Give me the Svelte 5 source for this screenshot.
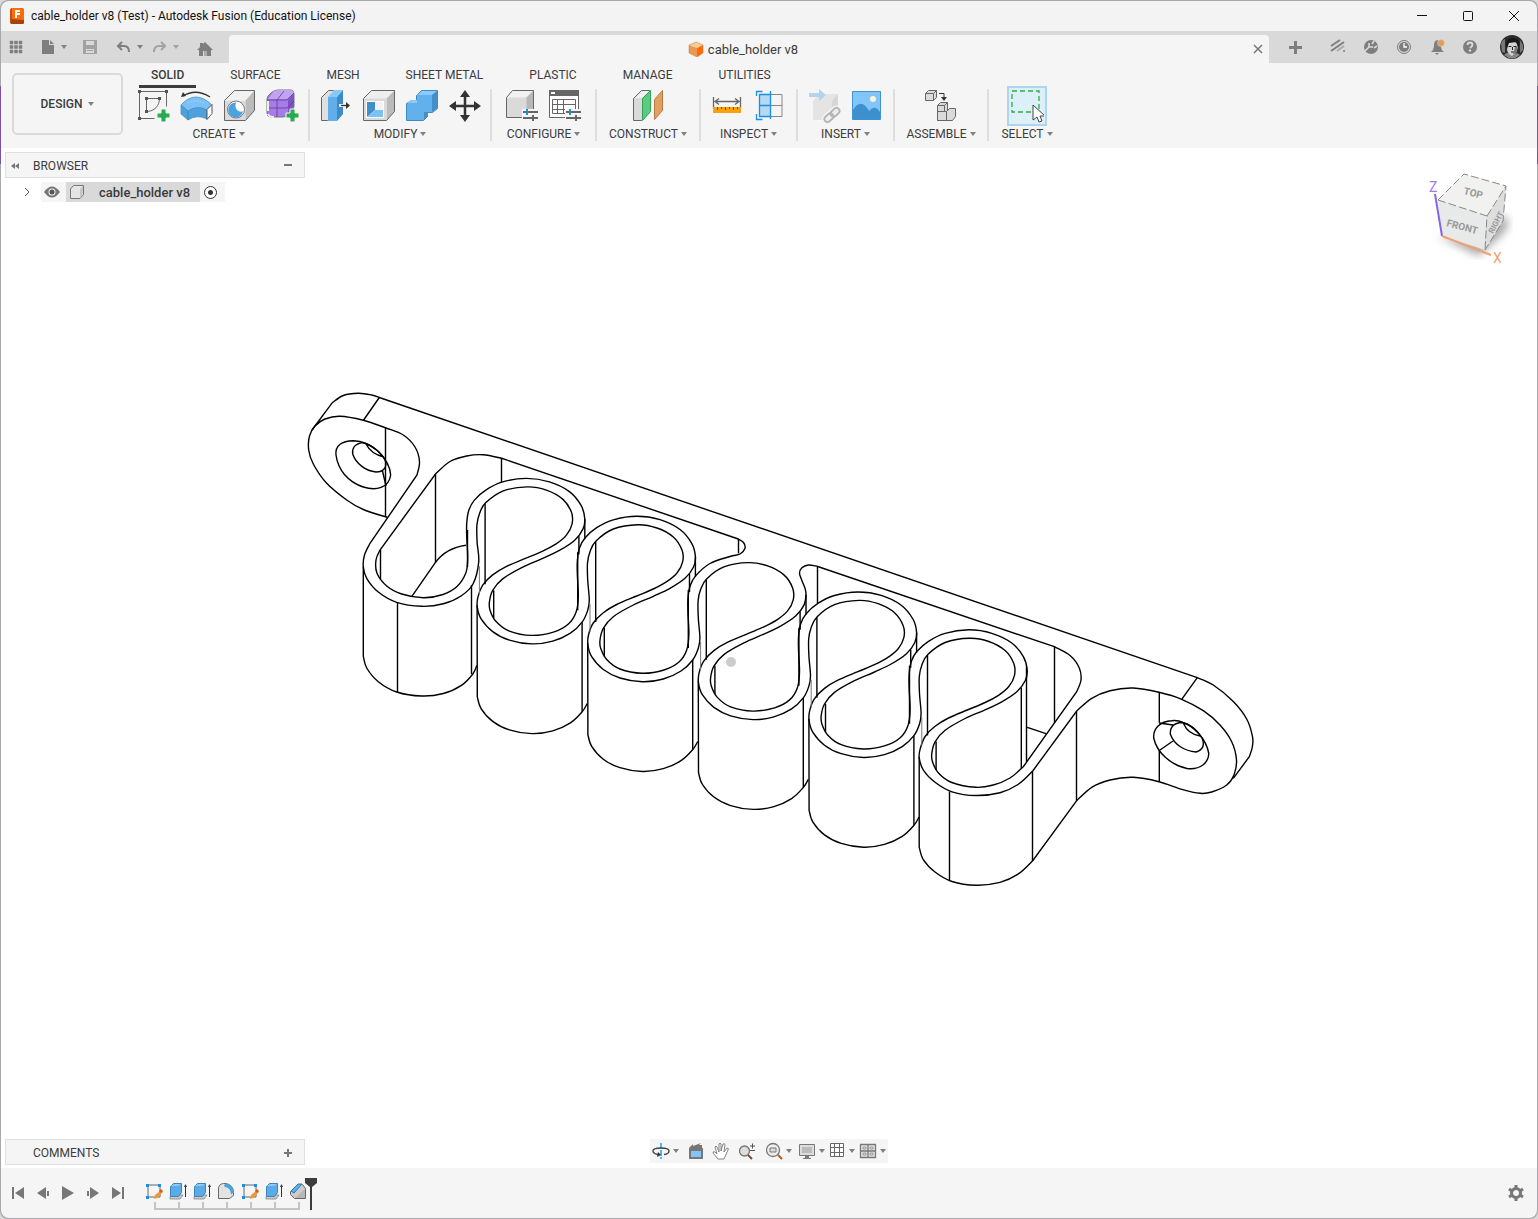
<script lang="ts">
  type Point = [number, number];

  const tabs = ["SOLID", "SURFACE", "MESH", "SHEET METAL", "PLASTIC", "MANAGE", "UTILITIES"];
  let activeTab = "SOLID";
  let commentsOpen = false;

  const groups = [
    { label: "CREATE", tools: ["sketch", "revolve", "hole", "form"] },
    { label: "MODIFY", tools: ["pressPull", "shell", "combine", "move"] },
    { label: "CONFIGURE", tools: ["configure", "configTable"] },
    { label: "CONSTRUCT", tools: ["plane"] },
    { label: "INSPECT", tools: ["measure", "section"] },
    { label: "INSERT", tools: ["derive", "canvas"] },
    { label: "ASSEMBLE", tools: ["assemble"] },
    { label: "SELECT", tools: ["select"] },
  ];

  const quick = [
    { name: "apps", menu: false, off: false },
    { name: "file", menu: true, off: false },
    { name: "save", menu: false, off: true },
    { name: "undo", menu: true, off: false },
    { name: "redo", menu: true, off: true },
    { name: "home", menu: false, off: false },
  ];
  const status = ["extensions", "updates", "jobs", "alerts", "help"];

  const navTools = [
    { name: "orbit", menu: true },
    { name: "lookAt", menu: false },
    { name: "pan", menu: false },
    { name: "zoom", menu: false },
    { name: "fit", menu: true },
    { name: "display", menu: true },
    { name: "grid", menu: true },
    { name: "viewports", menu: true },
  ];

  const playback = ["first", "prev", "play", "next", "last"];
  const features = ["tSketch", "tExtrude", "tExtrude", "tFillet", "tSketch", "tExtrude", "tChamfer"];

  // ribbon icons, 34 x 34
  const plus = `<path d="M24 20h5v4h4v5h-4v4h-5v-4h-4v-5h4z" fill="#2bab50" stroke="#f5f5f5"/>`;
  const sliders = `<path d="M17 23h18M17 29h18" stroke="#f5f5f5" stroke-width="6"/><path d="M18 23h15M18 29h15M28 26v6" stroke="#666" stroke-width="2"/><path d="M22 20v6" stroke="#1a8fe3" stroke-width="2"/>`;
  const ribbon: Record<string, string> = {
    sketch: `<path d="M2.5 2.5h27M2.5 2.5v27M2.5 29.5h15M29.5 2.5v15M9.5 9.5h13M9.5 9.5v13M22.5 9.5c0 7-5 13-13 13" fill="none" stroke="#666"/><path d="M1 1h3v3H1zM28 1h3v3h-3zM1 28h3v3H1zM8 8h3v3H8zM21 8h3v3h-3zM8 21h3v3H8z" fill="#555"/>${plus}`,
    revolve: `<path d="M3 7Q16-1 30 8" fill="none" stroke="#333" stroke-width="1.3"/><path d="M1 8l2-5 3 4z" fill="#333"/><path d="M1 16Q8 8 16 8t16 8l-5 5q-10-5-19 1z" fill="#7cc0f8" stroke="#3f8ec4" stroke-width=".7"/><path d="M1 16l7 6v9l-7-6zM8 22q9-6 19-1v9q-10-5-19 1z" fill="#4fa1dc" stroke="#3f8ec4" stroke-width=".7"/><path d="M27 20.5l5-5v9l-5 6z" fill="#fff" stroke="#555"/><path d="M8 14q8-4 16 0" fill="none" stroke="#cfe8fb" stroke-dasharray="1 2"/>`,
    hole: `<path d="M1.5 11.5h21v20h-21z" fill="#dadada"/><path d="M1.5 11.5l10-10h20l-9 10z" fill="#f1f1f1"/><path d="M22.5 11.5l9-10v20l-9 10z" fill="#bbb"/><path d="M1.5 11.5l10-10h20v20l-9 10h-21z" fill="none" stroke="#666"/><circle cx="13" cy="20.5" r="8.5" fill="#fff" stroke="#777"/><path d="M13 13.5a7.5 7.5 0 1 0 7 9c-5 1-9-3-7-9z" fill="#4ba2e0"/>`,
    form: `<path d="M1 10q0-3 4-6l3-2q2-1 5-1h12q3 0 3 4v12q0 3-3 6l-3 3q-2 2-5 2H5q-4 0-4-4z" fill="#a77be8" stroke="#777"/><path d="M2 10l6-8q2-1 5-1h12q3 0 3 3l-7 6z" fill="#c3a2f4"/><path d="M22 11l6-7v13l-6 8z" fill="#8052c7"/><path d="M1 11h20l7-7M11 11v17M1 19h20l7-7M11 11l7-9" fill="none" stroke="#5c4387" stroke-width=".8"/><path d="M2 25q1 3 6 3M2 12v10" fill="none" stroke="#eee" stroke-width="2"/>${plus}`,
    pressPull: `<path d="M2.5 8.5l7-7h5v24l-6 6h-6z" fill="#e0e0e0" stroke="#666"/><path d="M9 8h9v24H9z" fill="#60aeea"/><path d="M9 8l6-7h9l-6 7z" fill="#87c9ff"/><path d="M18 8l6-7v24l-6 7z" fill="#3d8bc5"/><path d="M20 16.5h8" stroke="#f5f5f5" stroke-width="3"/><path d="M22 16.5h7" stroke="#333" stroke-width="1.3"/><path d="M27 13l4 3.500-4 3.500z" fill="#333"/>`,
    shell: `<path d="M1.5 9.500l8-8h23v21l-8 9h-23z" fill="#eee"/><path d="M24.5 9.5l8-8v21l-8 9z" fill="#bbb"/><path d="M1.500 9.500h23v22h-23z" fill="#dadada"/><path d="M1.5 9.500l8-8h23v21l-8 9h-23z" fill="none" stroke="#666"/><path d="M4 12h18v17H4z" fill="#fff"/><path d="M5 13h8v8l-8 7z" fill="#408fc7"/><path d="M5 28l8-7h8v7z" fill="#7cc0f8"/><path d="M13 13h8v8h-8z" fill="#f3f3f3"/>`,
    combine: `<path d="M1.5 14.5l5-3h5v-5l5-5h16v18l-5 4h-5v4l-4 4h-17z" fill="#62b0ec" stroke="#3e8ac2"/><path d="M2 14l5-3h5v3zM12 6l5-4h15l-5 4z" fill="#8acaff"/><path d="M27 6l5-4v17l-5 4zM19 23h4v4l-4 4z" fill="#438fc6"/>`,
    move: `<path d="M17 4v26M4 17h26" stroke="#333" stroke-width="2.5"/><path d="M17 1l5 7H12zM17 33l5-7H12zM1 17l7-5v10zM33 17l-7-5v10z" fill="#333"/>`,
    configure: `<path d="M1.5 8.5l6-7h21v20l-7 7h-20z" fill="#dadada"/><path d="M1.5 8.5l6-7h21l-7 7z" fill="#f1f1f1"/><path d="M21.5 8.5l7-7v20l-7 7z" fill="#b8b8b8"/><path d="M1.5 8.5l6-7h21v20l-7 7h-20z" fill="none" stroke="#666"/>${sliders}`,
    configTable: `<path d="M1.5 2.5h29v26h-29z" fill="#fff" stroke="#666"/><path d="M1 1h30v6H1z" fill="#666"/><path d="M3 3h4v2H3z" fill="#fff"/><path d="M4.5 10.5h23v14h-23zM4.5 15.5h23M4.5 20.5h23M9.5 10.5v14M15.5 10.5v14" fill="none" stroke="#666"/>${sliders}`,
    plane: `<path d="M2.5 9.5l8-8h8v21l-8 9h-8z" fill="#dadada" stroke="#666"/><path d="M4 9l7-7h7l-7 7z" fill="#f1f1f1"/><path d="M11.5 9.5l8-8v21l-8 9z" fill="#5bcb82" stroke="#2da457"/><path d="M23.5 10.5l8-9v20l-8 9z" fill="#e0a165" stroke="#bb7a3d"/>`,
    measure: `<path d="M3.5 8v11M30.5 8v11M5 12.5h24M9 9.5l-4 3 4 3M25 9.5l4 3-4 3" fill="none" stroke="#666" stroke-width="1.3"/><path d="M3 18h28v6H3z" fill="#f7a20a"/><path d="M7.5 18v3M11.5 18v2M15.5 18v3M19.5 18v2M23.5 18v3M27.5 18v2" stroke="#795008"/>`,
    section: `<path d="M6 5h11v23H6z" fill="#b4daf3"/><path d="M17 5.5h12v22H17M6 16.5h23" fill="none" stroke="#888"/><path d="M17.5 2v28M17.5 5.5h-11v22h11M6 16.5h11M3.5 7V2.5h6M3.5 25v5.5h6" fill="none" stroke="#1a8fe3" stroke-width="1.3"/>`,
    derive: `<path d="M6 12l6-7h19v19l-6 7H6z" fill="#e4e4e4"/><path d="M25 12l6-7v19l-6 7z" fill="#d6d6d6"/><path d="M2 4h10V0l7 6-7 6V8H2z" fill="#b2d5ed"/><g fill="none" stroke="#f5f5f5" stroke-width="5" transform="rotate(-42 25 26)"><rect x="16" y="23" width="10" height="6" rx="3"/><rect x="24" y="23" width="10" height="6" rx="3"/></g><g fill="none" stroke="#b5b5b5" stroke-width="2" transform="rotate(-42 25 26)"><rect x="16" y="23" width="10" height="6" rx="3"/><rect x="24" y="23" width="10" height="6" rx="3"/></g>`,
    canvas: `<path d="M2.5 2.5h28v28h-28z" fill="#82c5fb" stroke="#3e92cf"/><circle cx="23" cy="10" r="3" fill="#f6f5d7"/><path d="M3 21q8-13 16 1 6-7 11 1v7H3z" fill="#3c90cd"/>`,
    assemble: `<g fill="#dadada" stroke="#666"><path d="M1.5 4.500l3-3h8v7l-3 3h-8zM13.5 16.500l3-3h7v18h-10z"/><path d="M13.5 22.500h9l3-3h6v8l-3 4h-15z"/><path d="M22.5 22.500v9M1.500 4.500h8v7M9.500 4.500l3-3M13.500 16.500h7v6M20.500 16.500l3-3"/></g><path d="M15 4.500h5v5" fill="none" stroke="#333"/><path d="M17 8h6l-3 4z" fill="#333"/>`,
    select: `<path d="M2 2h27v21H2z" fill="none" stroke="#2bab50" stroke-width="1.3" stroke-dasharray="5 3"/><path d="M23 16v15l4-3 2 5 3-1-2-5h5z" fill="#fff" stroke="#444"/>`,
  };

  // bar icons, 18 x 18
  const glyphs: Record<string, string> = {
    apps: `<path d="M3 3h3v3H3zM7.5 3h3v3h-3zM12 3h3v3h-3zM3 7.5h3v3H3zM7.5 7.5h3v3h-3zM12 7.5h3v3h-3zM3 12h3v3H3zM7.5 12h3v3h-3zM12 12h3v3h-3z" stroke="currentColor" stroke-width=".5"/>`,
    file: `<path d="M3 2h7v5h5v9H3zM11 2l4 4h-4z"/>`,
    save: `<path d="M2 2h14v14H2zm3 1v4h8V3zm0 8v4h8v-4z" fill-rule="evenodd"/><path d="M6 12h6v1H6z"/>`,
    undo: `<path d="M7 4L3 8l4 4M3 8h6q5 0 5 6" fill="none" stroke="currentColor" stroke-width="2"/>`,
    redo: `<path d="M10 4l4 4-4 4M14 8H8q-5 0-5 6" fill="none" stroke="currentColor" stroke-width="2"/>`,
    home: `<path d="M9 4l8 8h-2v6h-4v-5H7v5H3v-6H1l3-3V5h3v1z"/><path d="M8 13h3v5H8z" opacity=".5"/>`,
    extensions: `<path d="M2 8l9-6M2 13L15 4" stroke="currentColor" stroke-width="2"/><path d="M8 13l7-5" stroke="currentColor" stroke-width="2" opacity=".5"/><circle cx="15" cy="13" r="1"/>`,
    updates: `<circle cx="9" cy="9" r="7"/><path d="M2 14l5-5M7 5v4h4M12 3l-2 3M15 8l-3 2" stroke="#d9d9d9" stroke-width="1.600" fill="none"/>`,
    jobs: `<circle cx="9" cy="9" r="6.5" fill="none" stroke="currentColor"/><circle cx="9" cy="9" r="5"/><path d="M9 5v4h3" fill="none" stroke="#fff" stroke-width="1.3"/>`,
    alerts: `<path d="M3 14q3-2 3-7 0-4 3-5 4 1 4 6 0 4 3 6zM7 15h4l-2 2z"/><circle cx="13" cy="5" r="3.5" fill="#e99b58" stroke="#d9d9d9" stroke-width=".5"/>`,
    help: `<circle cx="9" cy="9" r="7"/><path d="M6.500 7q0-2.500 2.500-2.500T11.500 7q0 1-2.500 3" fill="none" stroke="#d9d9d9" stroke-width="1.800"/><circle cx="9" cy="12.5" r="1.2" fill="#d9d9d9"/>`,
    orbit: `<path d="M9 1v16" stroke="#55b4f5" stroke-width="2" stroke-dasharray="6 1"/><path d="M7 12.500Q1 12 1 9t8-3 8 3-5 3.500" fill="none" stroke="#444" stroke-width="1.4"/><path d="M6 10l3 3-4 2z" fill="#333"/>`,
    lookAt: `<path d="M2 6h14v11H2z"/><path d="M4 9h10v6H4z" fill="#82c5fb"/><path d="M2 6l4-4v2l8-3-2 2h3v3z" fill="#777"/>`,
    pan: `<path d="M6 17l-5-6q0-2 2-1l2 2-2-7q1-2 2 0l2 5V2q1-2 2 0v7l2-7q2-1 2 1l-1 7 3-4q2 0 1 2l-4 9z" fill="#fff" stroke="#777" stroke-width=".9"/>`,
    zoom: `<circle cx="6.5" cy="9" r="5" fill="#ddd" stroke="#777" stroke-width="1.3"/><path d="M10 13l4 4" stroke="#7b4b32" stroke-width="2"/><path d="M12 4h5M14.500 1.500v5M12 8.500h5" stroke="#555"/>`,
    fit: `<circle cx="8" cy="8" r="6.5" fill="#eee" stroke="#777" stroke-width="1.3"/><path d="M5 6h6v4H5z" fill="#ddd" stroke="#777"/><path d="M13 13l4 4" stroke="#b4571b" stroke-width="2"/>`,
    display: `<path d="M1.5 2.5h15v11h-15z" fill="#ddd" stroke="#777"/><path d="M4 5h10v6H4z" fill="#bbb"/><path d="M7 14h4v2h2v1H5v-1h2z"/>`,
    grid: `<path d="M2.5 1.5h13v13h-13zM2.5 5.5h13M2.5 10.5h13M6.5 1.5v13M11.5 1.5v13" fill="#fff" stroke="#666"/>`,
    viewports: `<path d="M1.5 2.5h15v13h-15zM9 2v13M1 9h16" fill="#e5e5e5" stroke="#777" stroke-width="1.3"/><path d="M4 5h3v2H4zM11 5h3v2h-3zM4 11h3v2H4zM11 11h3v2h-3z" fill="none" stroke="#999"/>`,
    first: `<path d="M3 3h2v12H3zM15 3v12L6 9z"/>`,
    prev: `<path d="M12 3v12L3 9zM13 7h2v5h-2z"/>`,
    play: `<path d="M3 2v14l12-7z"/>`,
    next: `<path d="M6 3v12l9-6zM3 7h2v5H3z"/>`,
    last: `<path d="M3 3v12l9-6zM13 3h2v12h-2z"/>`,
    tSketch: `<path d="M3 3h12v12H3z" fill="none" stroke="#666"/><path d="M1 2h3v3H1zM13 2h3v3h-3zM1 14h3v3H1z" fill="#1a8fe3"/><path d="M9 17l1-4 6-5 2 2-6 6z" fill="#f29a32"/><path d="M14 9l2-2 2 2-2 2z" fill="#d35f24"/>`,
    tExtrude: `<path d="M1 15l2-2h11l-3 4H1z" fill="#ccc" stroke="#777" stroke-width=".7"/><path d="M1.5 4.5l3-3h8v9l-3 4h-8z" fill="#5babe6" stroke="#3b84bb"/><path d="M2 4l3-2h7l-3 2z" fill="#8acaff"/><path d="M16.5 4v11" stroke="#333"/><path d="M15 5l1.500-3 1.500 3z" fill="#333"/>`,
    tFillet: `<path d="M1.5 7q0-5 5-5.500h3q7 2 7 9v3l-4 3h-11z" fill="#e3e3e3" stroke="#666"/><path d="M8 1.500q8 0 9 9l-3 2q0-7-7-8z" fill="#4ba2e0"/>`,
    tChamfer: `<path d="M1.5 9.500l7-7h5l3 4v10h-11l-4-4z" fill="#ccc" stroke="#666"/><path d="M2 9l7-7h4l-8 9z" fill="#5cafe9" stroke="#2c79b3"/><path d="M6 16l10-9v9z" fill="#b7b7b7"/>`,
    gear: `<circle cx="9" cy="9" r="4.5" fill="none" stroke="currentColor" stroke-width="3"/><path d="M9 1v3M9 14v3M2 5l3 2M13 11l3 2M2 13l3-2M13 7l3-2" stroke="currentColor" stroke-width="3"/>`,
  };

  // the clip repeats along this vector
  const STEP: Point = [110.6, 37.85];
  const HEIGHT = 89.7;

  const move = (pts: Point[], k: number, dy = 0): Point[] =>
    pts.map(([x, y]) => [x + STEP[0] * k, y + STEP[1] * k + dy]);

  // every run is a smooth curve, runs are joined by straight lines
  const outline = (...runs: Point[][]) => {
    let d = "";
    runs.forEach((p) => {
      d += `${d ? "L" : "M"}${p[0].join(" ")}`;
      for (let i = 0; i < p.length - 1; i++) {
        const a = p[i - 1] ?? p[i];
        const b = p[i];
        const c = p[i + 1];
        const e = p[i + 2] ?? c;
        const c1 = [b[0] + (c[0] - a[0]) / 6, b[1] + (c[1] - a[1]) / 6];
        const c2 = [c[0] - (e[0] - b[0]) / 6, c[1] - (e[1] - b[1]) / 6];
        d += `C${[...c1, ...c2, ...c].map((n) => n.toFixed(1)).join(" ")}`;
      }
    });
    return d;
  };

  const loopIn: Point[] = [[589.3, 600], [587.7, 580], [587.5, 563], [590, 551.7], [596, 541], [613.3, 529], [638, 524.7], [657, 528], [673.3, 537], [682, 550], [682.7, 561.7], [677, 573], [666.7, 581.7], [653.3, 589], [636.7, 596], [616.7, 604.5], [603.3, 612.7], [593.3, 623], [588.5, 635]];
  const cupOut: Point[] = [[587.9, 645], [591.7, 656.7], [603.3, 669.5], [620, 678], [642.5, 681.8], [663.3, 679], [681, 671], [692.7, 660], [698.3, 648.3]];
  const loopOutLeft: Point[] = [[578.3, 596.7], [577.3, 573.3], [577.4, 560], [579.5, 548], [585, 538], [596.7, 527.7], [613.3, 519.8]];
  const loopOutRight: Point[] = [[637, 516.3], [660, 519.7], [680, 529.5], [691.7, 543.3], [695.4, 556.7], [693.5, 567], [685, 578.3], [670, 588.3], [653.3, 596.3], [633.3, 605], [613.3, 616.7], [603.3, 628.3]];
  const cupIn: Point[] = [[600, 640], [600.7, 648.3], [606.7, 659.5], [620, 669], [642, 673.3], [664, 670], [679, 662], [686.7, 650]];

  const tailU1: Point[] = [[370, 543.3], [364.5, 555], [363.3, 566.7], [366.7, 578.3], [378.3, 592], [396.7, 602.3], [421.7, 606.3], [443.3, 603.8], [461, 596], [473, 584]];
  const leftEar: Point[] = [[388.3, 517.7], [363.3, 509.5], [346.7, 500], [326.7, 483.3], [313.3, 464], [308.7, 450], [309.5, 436], [315, 426], [325, 419], [340, 416.3], [363.3, 420.3], [386, 428], [403.3, 435], [415, 447], [419.5, 461.7], [417, 475]];
  const endU6: Point[] = [[919.2, 757.5], [923.3, 770], [935, 782.3], [952, 791.8], [976, 795.5], [1000, 792.7], [1018, 784.5], [1032.7, 771]];
  const rightTop: Point[] = [[1076.7, 711], [1091.7, 698.3], [1110, 690.7], [1133.3, 688], [1159, 692.3], [1181.7, 699.3], [1203.3, 710.7], [1220, 725], [1231.7, 741.7], [1236.5, 760], [1234, 775], [1226.7, 785], [1211.7, 792], [1200, 793.3], [1181.7, 789.3], [1159, 781.7], [1133.3, 777.3], [1110, 780], [1091.7, 787.3], [1076.7, 800.7]];

  const ribbonOuter = [
    ...tailU1,
    ...[0, 1, 2, 3, 4].flatMap((k) => [
      ...move(loopIn, k - 1),
      ...(k < 4 ? move(cupOut, k - 1) : endU6),
    ]),
  ];

  const notchLeft: Point[] = [...move(loopOutLeft.slice(0, 5), 1), [710, 563.5], [730, 556.5], [740, 554], [745, 548.3], [743.5, 542.5], [738.3, 539]];
  const bodyLeft: Point[] = [[501.7, 458.3], [483.3, 454.8], [466.7, 456], [450, 461.5], [435.5, 474]];
  const innerU1: Point[] = [[380, 550], [376, 560], [377, 573.3], [386.7, 586], [401.7, 594], [423.3, 597.7], [443, 594.5], [457, 586.5], [465.7, 573.3]];
  const innerLeft: Point[] = [
    ...innerU1,
    ...[0, 1].flatMap((k) => move([...loopOutLeft, ...loopOutRight, ...cupIn], k - 1)),
    ...notchLeft,
  ];

  const notchRight: Point[] = [[817, 566.3], [808.3, 565], [801.7, 568], [799.5, 573.3], [801.7, 580], [805, 588.3]];
  const innerRight: Point[] = [
    ...notchRight,
    ...move(loopOutRight.slice(4), 1),
    ...move(cupIn, 1),
    ...move([...loopOutLeft, ...loopOutRight, ...cupIn], 2),
    ...move([...loopOutLeft, ...loopOutRight], 3),
    ...move(cupIn.slice(0, 4), 3),
    [976, 787.3], [993.3, 785], [1010, 778], [1023.3, 766.7],
  ];
  const bodyRight: Point[] = [[1076.7, 691.7], [1081, 680], [1079.3, 668], [1070, 655.5], [1054.3, 646.7]];

  const backEdge = outline(
    [[312, 430]],
    [[332.3, 402.7], [343.3, 395.5], [358.3, 393.3], [371.7, 395], [379.3, 397.5]],
    [[1197.3, 677.7], [1213.3, 685], [1233.3, 701.5], [1246.7, 719], [1252.5, 736.7], [1252.3, 747], [1249.3, 756.7]],
    [[1233.3, 778.3]],
  );

  const baseU6 = outline(
    [[1076.7, 800.7]],
    move([...endU6].reverse(), 0, HEIGHT),
    [[919.2, 757]],
  );
  const baseU1 = outline([[363.3, 566.7]], [...move(tailU1.slice(2), 0, HEIGHT), [476.7, 665.5]]);
  const baseCup = outline([[587.7, 643]], [...move(cupOut.slice(0, 8), 0, HEIGHT), [697.7, 741.5]]);

  const holes = [
    "M353.3 440.7C342 441 335 445 336 455C338 470 348 482 363.3 487C376 491 389 488 390.7 475C390 464 384 457 378 451C370 444 362 441 353.3 440.7Z",
    "M363 442.5C354 444 352 448 352.7 454C356 464 366 471 376 472C384 472 387 467 385.5 461C383 455 374 446 363 442.5M366 444Q371 454 384 457M382.5 471L386 486",
    "M1171.7 720.7C1160 721 1153 729 1153.7 738C1157 753 1171 765 1187 768.5C1201 770 1209 762 1208.7 753C1206 739 1194 726 1183 722.5Q1178 720 1171.7 720.7Z",
    "M1182 722.5C1174 723 1170 727 1170.3 734C1174 745 1185 751 1196 752C1203 750 1205 745 1202 738C1197 730 1190 724 1182 722.5M1183.5 723.5Q1188 734 1200 736M1159 723L1173 725M1160 750L1173 741",
  ];

  const seams = [
    "M379.3 397.5L363.3 420.5M1197.3 677.7L1181.7 699.3M385.5 428V517M435.5 474V562.7M501.5 458.3V482M397.5 602.5V692M471.5 585V674",
    "M380.5 550V579M411.7 596.7L435.3 562.7Q446 548 466 545.3M467.5 530V567M738.5 539V553.5M817.5 566.3V603M1054.5 646.7V722.7M1076.5 711.5V800.7",
    "M1032.5 771V861M949.5 791.5V880.5M1026.5 667V761.7M1021.3 688V768M1027.3 727.3L1046 733.7M1159.3 692.5V722.5M1159.3 750V781.7",
  ];

  const title = (name: string) => name.replace(/^t(?=[A-Z])/, "").replace(/([A-Z])/g, " $1").trim().toLowerCase();
</script>

{#snippet glyph(name: string)}
  <svg class="glyph" viewBox="0 0 18 18" fill="currentColor" aria-hidden="true">{@html glyphs[name]}</svg>
{/snippet}

<div class="window">
  <header class="titlebar">
    <svg class="app-icon" viewBox="0 0 16 18" aria-hidden="true">
      <path d="M2 1h12l1 1v14l-1 1H2l-1-2V3z" fill="#ff6b0b" />
      <path d="M1 12l14 1v3l-1 1H2l-1-2z" fill="#a5430a" />
      <path d="M1 3l2-2v12l-2 2z" fill="#c24f0b" />
      <path d="M6 3h5v2H8v1h3v2H8v3H6z" fill="#fff" />
    </svg>
    <span class="title">cable_holder v8 (Test) - Autodesk Fusion (Education License)</span>
    <div class="window-buttons">
      <button aria-label="Minimize"><svg viewBox="0 0 12 12"><path d="M1 5.5h10" /></svg></button>
      <button aria-label="Maximize"><svg viewBox="0 0 12 12"><rect x="1.5" y="1.5" width="9" height="9" rx="1" /></svg></button>
      <button aria-label="Close"><svg viewBox="0 0 12 12"><path d="M1 1l10 10M11 1L1 11" /></svg></button>
    </div>
  </header>

  <div class="document-bar">
    <div class="quick">
      {#each quick as item}
        <button class:off={item.off} aria-label={item.name}>
          {@render glyph(item.name)}
          {#if item.menu}<i class="caret"></i>{/if}
        </button>
      {/each}
    </div>
    <div class="document-tab">
      <div class="document-name">
        <svg viewBox="0 0 16 16" aria-hidden="true">
          <path d="M1 4l7-3 7 3-6 3z" fill="#f5cd9b" />
          <path d="M1 4l8 3v9l-8-4z" fill="#eb994f" />
          <path d="M9 7l6-3v8l-6 4z" fill="#ff6b0b" />
          <path d="M1 4l7-3 7 3v8l-6 4-8-4z" fill="none" stroke="#c8793d" stroke-width=".5" />
        </svg>
        cable_holder v8
      </div>
      <button class="close-tab" aria-label="Close document">
        <svg viewBox="0 0 10 10"><path d="M1 1l8 8M9 1L1 9" /></svg>
      </button>
    </div>
    <div class="status">
      <button aria-label="New document">
        <svg class="glyph" viewBox="0 0 18 18"><path d="M9.5 3v13M3 9.5h13" stroke="currentColor" stroke-width="3" /></svg>
      </button>
      {#each status as name}
        <button aria-label={name}>{@render glyph(name)}</button>
      {/each}
      <button aria-label="Account">
        <svg class="avatar" viewBox="0 0 24 24">
          <circle cx="12" cy="12" r="12" fill="#2b2b2b" />
          <path d="M1 9q1-4 4-5v14l-3-1zM20 5l3 5v5l-3 3z" fill="#777" />
          <path d="M4 20q3-3 5-2l4 3 4-3 3 2q-8 7-16 0z" fill="#888" />
          <path d="M8 8q4-3 9 0l1 4-2 6q-2 3-4 3-4-2-5-6z" fill="#d2d2d2" />
          <path d="M6 11q-1-7 6-8 8 0 7 8l-1 1-2-5-7 1-2 5z" fill="#161616" />
          <path d="M15 12l3-1-2 7-3 2z" fill="#777" />
          <path d="M8.5 11.5h3M13.5 11.500h3M11 17h3M12.500 12v3" stroke="#222" />
        </svg>
      </button>
    </div>
  </div>

  <div class="ribbon">
    <button class="workspace">DESIGN <i class="caret"></i></button>
    <div class="ribbon-main">
      <nav class="tabs">
        {#each tabs as tab}
          <button class:active={tab === activeTab} on:click={() => (activeTab = tab)}>{tab}</button>
        {/each}
      </nav>
      <div class="groups">
        {#each groups as group}
          <section class="group">
            <div class="tools">
              {#each group.tools as tool}
                <button class="tool" class:selected={tool === "select"} aria-label={title(tool)}>
                  <svg viewBox="0 0 34 34">{@html ribbon[tool]}</svg>
                </button>
              {/each}
            </div>
            <button class="group-label">{group.label}<i class="caret"></i></button>
          </section>
        {/each}
      </div>
    </div>
  </div>

  <main class="canvas">
    <svg class="model" viewBox="1 148 1536 1020" aria-label="cable_holder v8">
      <path d={backEdge} />
      <path d={outline(leftEar, ribbonOuter, rightTop)} />
      <path d="{outline(bodyLeft, innerLeft)}Z" />
      <path d="{outline(innerRight, bodyRight)}Z" />
      <path d={baseU1} />
      <path d={baseU6} />
      {#each [0, 1, 2, 3, 4] as k}
        <g transform="translate({STEP[0] * (k - 1)} {STEP[1] * (k - 1)})">
          {#if k < 4}
            <path d={baseCup} />
            <path d="M692.7 660V749.5M688.3 590V648M689.5 574V592M695.4 557V577" />
          {/if}
          <path d="M595.7 541.5V622M604.3 628V656.5" />
          <path class="thin" d="M590 604V632" />
        </g>
      {/each}
      {#each holes as d}<path {d} />{/each}
      {#each seams as d}<path {d} />{/each}
      <circle cx="731" cy="662" r="5" fill="#ccc" stroke="none" />
    </svg>

    <aside class="browser">
      <div class="panel">
        <button class="collapse" aria-label="Collapse browser">
          <svg viewBox="0 0 8 6"><path d="M4 0v6L0 3zM8 0v6L4 3z" fill="#777" /></svg>
        </button>
        <span>BROWSER</span>
        <button class="toggle" aria-label="Hide browser"><svg viewBox="0 0 8 8"><path d="M0 3h8" /></svg></button>
      </div>
      <div class="tree-row">
        <button class="expand" aria-label="Expand"><svg viewBox="0 0 6 10"><path d="M1 1l4 4-4 4" fill="none" stroke="#555" /></svg></button>
        <button class="eye" aria-label="Visibility">
          <svg viewBox="0 0 16 12"><path d="M0 6q8-11 16 0-8 11-16 0z" fill="#777" /><circle cx="8" cy="6" r="3.5" fill="#f5f5f5" /><circle cx="8" cy="6" r="2.5" fill="#555" /></svg>
        </button>
        <button class="component">
          <svg viewBox="0 0 16 16"><path d="M1.5 5l3-3.5h10v9l-3.500 4h-9.500z" fill="#e5e5e5" stroke="#777" /><path d="M11 5l3-3v8l-3 4z" fill="#c8c8c8" /></svg>
          cable_holder v8
        </button>
        <label class="activate"><input type="radio" checked aria-label="Activate component" /></label>
      </div>
    </aside>

    <svg class="viewcube" viewBox="0 0 90 100" aria-label="View cube">
      <defs>
        <filter id="soft"><feGaussianBlur stdDeviation="4" /></filter>
      </defs>
      <path d="M14 70l42 20 26-24 4-12-6-4-30 24z" fill="#aaa" filter="url(#soft)" />
      <path d="M15 34l26-26 42 12-19 30z" fill="#f1f1f0" />
      <path d="M15 34l49 16-2 34-43-14z" fill="#e8e9e9" />
      <path d="M64 50l19-30-3 35-18 29z" fill="#dededf" />
      <path d="M15 34l26-26 42 12-3 35-18 29M15 34l49 16-2 34M64 50l19-30" fill="none" stroke="#888" stroke-dasharray="8 3" />
      <path d="M12 28l7 42" stroke="#8565e5" stroke-width="2" />
      <path d="M19 70l49 19" stroke="#eda271" stroke-width="2" />
      <text x="6" y="26" fill="#a17ced" class="axis">Z</text>
      <text x="70" y="97" fill="#eda271" class="axis">X</text>
      <text x="40" y="28" transform="rotate(14 40 28)">TOP</text>
      <text x="23" y="60" transform="rotate(15 23 60)" class="front">FRONT</text>
      <text x="70" y="68" transform="rotate(-62 70 68)" class="side">RIGHT</text>
    </svg>

    <div class="panel comments">
      <span>COMMENTS</span>
      <button class="toggle" aria-label="Add comment" aria-expanded={commentsOpen} on:click={() => (commentsOpen = !commentsOpen)}>
        <svg viewBox="0 0 8 8"><path d="M0 4h8M4 0v8" /></svg>
      </button>
    </div>

    <div class="nav-bar">
      {#each navTools as tool}
        <button aria-label={title(tool.name)}>
          {@render glyph(tool.name)}
          {#if tool.menu}<i class="caret"></i>{/if}
        </button>
      {/each}
    </div>
  </main>

  <footer class="timeline">
    <div class="playback">
      {#each playback as name}
        <button aria-label={name}>{@render glyph(name)}</button>
      {/each}
    </div>
    <div class="features">
      <div class="feature-row">
        {#each features as name}
          <button aria-label={title(name)}>{@render glyph(name)}</button>
        {/each}
      </div>
      <div class="track"></div>
    </div>
    <svg class="marker" viewBox="0 0 12 32" aria-hidden="true"><path d="M0 0h12v5L7 9v23H5V9L0 5z" fill="#3c3c3c" /></svg>
    <button class="settings" aria-label="Settings">{@render glyph("gear")}</button>
  </footer>
</div>

<style>
  :global(body) {
    margin: 0;
    background: #d9d9d9;
  }

  .window {
    box-sizing: border-box;
    min-height: 100vh;
    padding: 1px;
    display: flex;
    flex-direction: column;
    overflow: hidden;
    border-radius: 8px;
    background: linear-gradient(#a9a9ad 0 86px, #7b52ab 86px 164px, #a9a9ad 164px);
    font-family: Roboto, "Liberation Sans", sans-serif;
    font-size: 12px;
    color: #3c3c3c;
  }

  button {
    padding: 0;
    border: 0;
    background: none;
    color: inherit;
    font: inherit;
    cursor: pointer;
    display: flex;
    align-items: center;
  }

  svg {
    display: block;
    flex: none;
  }

  .glyph {
    width: 18px;
    height: 18px;
  }

  .caret {
    display: inline-block;
    border: 3px solid transparent;
    border-top: 4px solid #808080;
    border-bottom: 0;
  }

  /* title bar */
  .titlebar {
    display: flex;
    align-items: center;
    height: 30px;
    padding-left: 8px;
    background: #f3f3f3;
    border-radius: 8px 8px 0 0;
    color: #111;
  }

  .app-icon {
    width: 16px;
    height: 18px;
    margin-right: 6px;
  }

  .title {
    flex: 1;
  }

  .window-buttons {
    display: grid;
    grid-template-columns: repeat(3, 46px);
  }

  .window-buttons button {
    justify-content: center;
    height: 30px;
  }

  .window-buttons svg {
    width: 12px;
    height: 12px;
    fill: none;
    stroke: #111;
  }

  /* document bar */
  .document-bar {
    display: flex;
    align-items: flex-end;
    height: 32px;
    background: #d9d9d9;
    color: #7e7e7e;
  }

  .quick {
    display: grid;
    grid-template-columns: 32px 42px 34px 36px 45px 33px;
    height: 32px;
    padding-left: 6px;
  }

  .quick button {
    gap: 4px;
  }

  .quick .off {
    opacity: 0.6;
  }

  .document-tab {
    flex: 1;
    display: flex;
    align-items: center;
    height: 28px;
    padding-right: 6px;
    border-radius: 4px 4px 0 0;
    background: #f5f5f5;
  }

  .document-name {
    flex: 1;
    display: flex;
    align-items: center;
    justify-content: center;
    gap: 4px;
    padding-left: 4px;
    color: #3c3c3c;
    font-size: 13px;
  }

  .document-name svg {
    width: 16px;
    height: 16px;
  }

  .close-tab svg {
    width: 10px;
    height: 10px;
    stroke: #777;
    stroke-width: 1.5;
  }

  .status {
    display: grid;
    grid-template-columns: 52px repeat(5, 33px) 51px;
    height: 32px;
  }

  .status button {
    justify-content: center;
  }

  .avatar {
    width: 24px;
    height: 24px;
  }

  /* ribbon */
  .ribbon {
    display: flex;
    height: 85px;
    background: #f5f5f5;
  }

  .workspace {
    box-sizing: border-box;
    width: 111px;
    height: 62px;
    margin: 10px 6px 0 11px;
    justify-content: center;
    gap: 6px;
    border: 2px solid #dadada;
    border-radius: 5px;
    font-weight: 500;
  }

  .tabs {
    display: flex;
    gap: 22px;
    height: 25px;
    padding-left: 10px;
  }

  .tabs button {
    padding: 2px 12px 0;
    border-bottom: 3px solid transparent;
  }

  .tabs .active {
    border-color: #3c3c3c;
    font-weight: 500;
  }

  .groups {
    display: grid;
    grid-template-columns: 181px 182px 105px 104px 97px 97px 94px 78px;
  }

  .group {
    display: flex;
    flex-direction: column;
    align-items: center;
    height: 52px;
    margin-top: 1px;
    border-right: 2px solid #dedede;
  }

  .group:last-child {
    border-color: transparent;
  }

  .tools {
    display: flex;
    gap: 9px;
  }

  .tool svg {
    width: 34px;
    height: 34px;
  }

  .tool.selected {
    box-sizing: border-box;
    height: 40px;
    margin: -3px 0;
    padding: 1px;
    border: 2px solid #add5ed;
    background: #ddeff7;
  }

  .group-label {
    gap: 3px;
    height: 18px;
    margin-top: 3px;
  }

  /* canvas */
  .canvas {
    position: relative;
    flex: 1;
    display: grid;
    grid-template: "browser . cube" 1fr "comments nav ." auto / 1fr auto 1fr;
    min-height: 600px;
    background: #fff;
  }

  .model {
    position: absolute;
    inset: 0;
    width: 100%;
    height: 100%;
    fill: none;
    stroke: #000;
    stroke-width: 1.4;
  }

  .thin {
    stroke: #777;
    stroke-width: 1;
  }

  .browser {
    grid-area: browser;
    position: relative;
    align-self: start;
    margin: 4px;
  }

  .panel {
    box-sizing: border-box;
    display: flex;
    align-items: center;
    width: 300px;
    height: 26px;
    padding: 1px 12px 0 27px;
    border: 1px solid #e0e0e0;
    background: #f5f5f5;
  }

  .panel span {
    flex: 1;
  }

  .collapse {
    width: 22px;
    margin-left: -22px;
  }

  .collapse svg {
    width: 8px;
    height: 6px;
  }

  .toggle svg {
    width: 8px;
    height: 8px;
    stroke: #777;
    stroke-width: 2;
  }

  .tree-row {
    display: flex;
    height: 20px;
    margin: 4px 0 0 19px;
  }

  .expand {
    width: 17px;
  }

  .expand svg {
    width: 6px;
    height: 10px;
  }

  .eye {
    width: 25px;
    padding-left: 3px;
    background: #f5f5f5;
  }

  .eye svg {
    width: 16px;
    height: 12px;
  }

  .component {
    gap: 14px;
    width: 134px;
    padding-left: 3px;
    background: #d9d9d9;
    font-size: 13px;
    font-weight: 500;
    white-space: nowrap;
  }

  .component svg {
    width: 16px;
    height: 16px;
  }

  .activate {
    display: flex;
    align-items: center;
    justify-content: center;
    width: 25px;
    background: #f5f5f5;
  }

  .activate input {
    appearance: none;
    width: 13px;
    height: 13px;
    margin: 0 4px 0 0;
    border: 1px solid #333;
    border-radius: 50%;
    background: radial-gradient(circle, #333 0 2px, #fff 3px);
  }

  .viewcube {
    grid-area: cube;
    position: relative;
    justify-self: end;
    width: 90px;
    height: 100px;
    margin: 18px 24px 0 0;
  }

  .viewcube text {
    font-size: 10px;
    font-weight: 700;
  }

  .viewcube text:not(.axis) {
    fill: #999;
  }

  .viewcube .axis {
    font-size: 14px;
    font-weight: 400;
  }

  .viewcube .side {
    font-size: 8px;
  }

  .comments {
    grid-area: comments;
    position: relative;
    margin: 0 0 3px 4px;
  }

  .nav-bar {
    grid-area: nav;
    position: relative;
    display: grid;
    grid-template-columns: 35px 25px 26px 27px 33px 30px 31px 31px;
    height: 24px;
    background: #f5f5f5;
    color: #777;
  }

  .nav-bar button {
    gap: 3px;
    padding-left: 2px;
  }

  /* timeline */
  .timeline {
    display: flex;
    height: 50px;
    background: #f5f5f5;
    border-radius: 0 0 8px 8px;
    color: #777;
  }

  .playback {
    display: grid;
    grid-template-columns: repeat(5, 25px);
    height: 49px;
    padding-left: 4px;
  }

  .playback button {
    justify-content: center;
  }

  .features {
    padding: 14px 0 0 12px;
  }

  .feature-row {
    display: flex;
  }

  .feature-row button {
    justify-content: center;
    width: 24px;
  }

  .track {
    width: 146px;
    height: 6px;
    margin: 2px 0 0 12px;
    border-bottom: 2px solid #c4c4c4;
    background: repeating-linear-gradient(90deg, #c4c4c4 0 2px, transparent 2px 24px);
  }

  .marker {
    width: 12px;
    height: 32px;
    margin: 10px 0 0 -5px;
  }

  .settings {
    height: 49px;
    margin: 0 12px 0 auto;
  }
</style>
